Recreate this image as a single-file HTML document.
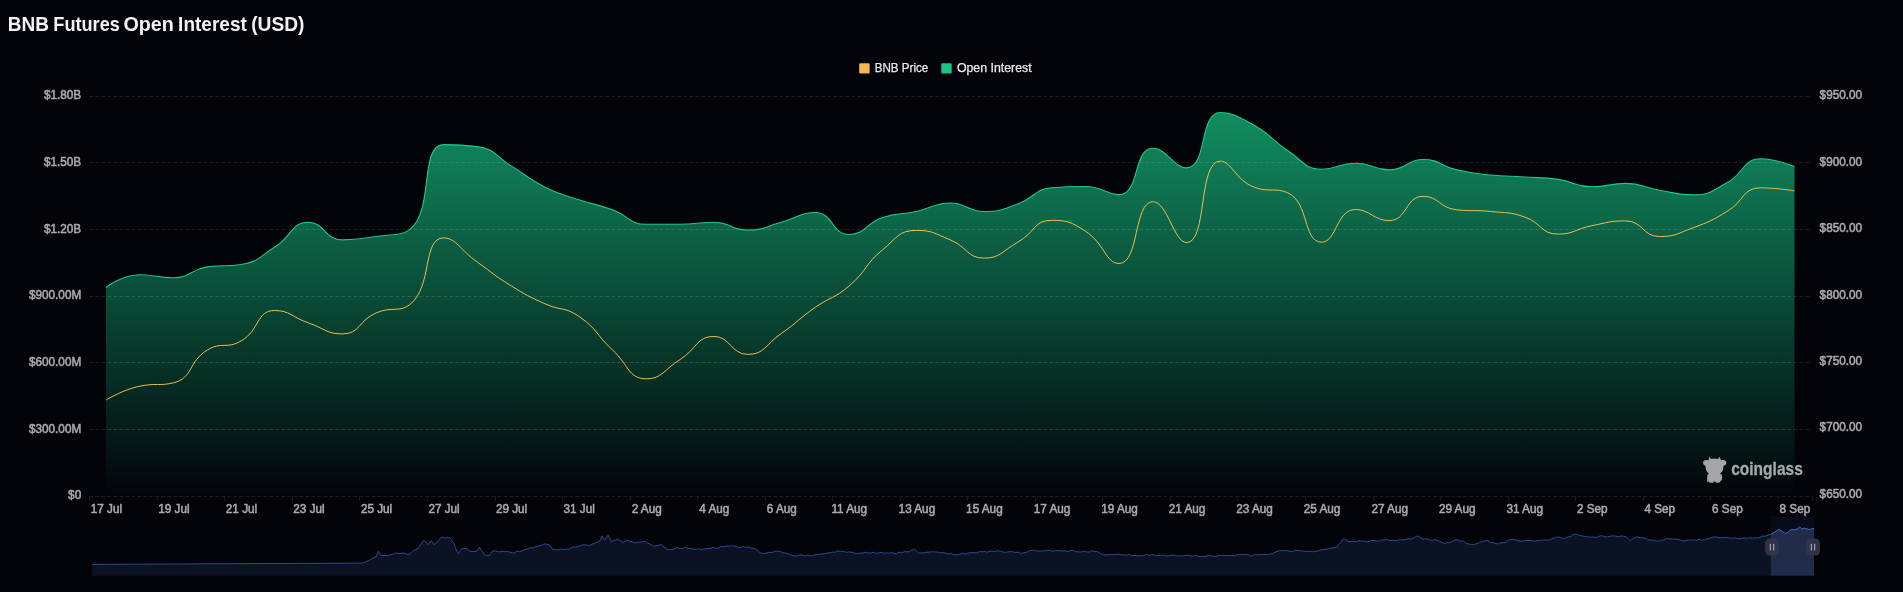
<!DOCTYPE html>
<html><head><meta charset="utf-8"><title>BNB Futures Open Interest</title>
<style>
html,body{margin:0;padding:0;background:#02040a;}
body{width:1903px;height:592px;overflow:hidden;font-family:"Liberation Sans",sans-serif;}
svg{display:block;will-change:transform;}
text{font-family:"Liberation Sans",sans-serif;}
.ax{font-size:12.3px;fill:#a9aaad;stroke:#a9aaad;stroke-width:0.55px;}
.lg{font-size:12px;fill:#e9eaed;stroke:#e9eaed;stroke-width:0.25px;}
</style></head><body>
<svg width="1903" height="592" viewBox="0 0 1903 592">
<defs>
<linearGradient id="gg" gradientUnits="userSpaceOnUse" x1="0" y1="112.5" x2="0" y2="496.5">
<stop offset="0" stop-color="#17c685" stop-opacity="0.705"/>
<stop offset="1" stop-color="#17c685" stop-opacity="0"/>
</linearGradient>
<clipPath id="ac"><path d="M106.00 287.50C106.00 287.50 122.35 274.70 139.77 274.70C156.12 274.70 157.03 277.70 173.54 277.70C190.80 277.70 190.04 269.41 207.31 266.90C223.81 264.50 225.18 266.90 241.08 264.50C258.95 261.80 258.77 257.05 274.85 247.00C292.54 235.95 290.94 222.30 308.62 222.30C324.71 222.30 324.53 239.90 342.39 239.90C358.30 239.90 359.42 239.10 376.16 236.50C393.19 233.85 400.67 236.50 409.93 229.40C434.44 210.62 419.06 144.60 443.70 144.60C452.83 144.60 461.76 144.60 477.47 146.60C495.53 148.90 494.58 155.88 511.24 165.90C528.35 176.18 527.25 178.31 545.01 187.20C561.02 195.21 561.71 193.99 578.78 199.70C595.48 205.29 596.02 203.78 612.55 209.80C629.79 216.08 628.72 224.30 646.32 224.30C662.49 224.30 663.22 224.30 680.09 224.30C696.99 224.30 697.18 222.30 713.86 222.30C730.95 222.30 730.75 230.10 747.63 230.10C764.52 230.10 764.64 226.67 781.40 222.30C798.41 217.87 799.44 212.50 815.17 212.50C833.21 212.50 831.51 234.50 848.94 234.50C865.28 234.50 865.02 223.62 882.71 217.60C898.79 212.12 899.72 215.12 916.48 211.50C933.49 207.82 933.37 203.00 950.25 203.00C967.14 203.00 967.08 211.50 984.02 211.50C1000.85 211.50 1001.58 209.69 1017.79 204.00C1035.35 197.84 1033.81 189.24 1051.56 187.80C1067.58 186.50 1068.67 186.50 1085.33 186.50C1102.44 186.50 1106.36 194.60 1119.10 194.60C1140.13 194.60 1132.78 148.30 1152.87 148.30C1166.55 148.30 1173.95 167.90 1186.64 167.90C1207.72 167.90 1198.72 112.50 1220.41 112.50C1232.49 112.50 1238.62 116.50 1254.18 125.30C1272.39 135.60 1270.29 139.20 1287.95 150.70C1304.06 161.20 1303.85 169.30 1321.72 169.30C1337.62 169.30 1338.63 163.20 1355.49 163.20C1372.40 163.20 1372.59 169.90 1389.26 169.90C1406.36 169.90 1406.15 159.50 1423.03 159.50C1439.92 159.50 1439.63 165.96 1456.80 169.90C1473.40 173.71 1473.60 173.22 1490.57 175.00C1507.37 176.77 1507.46 175.90 1524.34 177.00C1541.23 178.10 1541.40 177.00 1558.11 179.40C1575.17 181.85 1574.84 186.80 1591.88 186.80C1608.61 186.80 1608.89 183.40 1625.65 183.40C1642.66 183.40 1642.45 187.31 1659.42 190.20C1676.22 193.06 1676.73 194.90 1693.19 194.90C1710.50 194.90 1711.29 191.18 1726.96 182.80C1745.06 173.13 1742.34 158.80 1760.73 158.80C1776.11 158.80 1794.50 166.60 1794.50 166.60L1794.50 496.50 L106.00 496.50 Z"/></clipPath>
</defs>
<rect x="0" y="0" width="1903" height="592" fill="#02040a"/>
<text x="7.70" y="30.5" font-size="19.3" font-weight="bold" fill="#f2f3f5" textLength="41.20" lengthAdjust="spacingAndGlyphs">BNB</text><text x="53.30" y="30.5" font-size="19.3" font-weight="bold" fill="#f2f3f5" textLength="66.60" lengthAdjust="spacingAndGlyphs">Futures</text><text x="123.40" y="30.5" font-size="19.3" font-weight="bold" fill="#f2f3f5" textLength="50.50" lengthAdjust="spacingAndGlyphs">Open</text><text x="178.10" y="30.5" font-size="19.3" font-weight="bold" fill="#f2f3f5" textLength="68.70" lengthAdjust="spacingAndGlyphs">Interest</text><text x="251.20" y="30.5" font-size="19.3" font-weight="bold" fill="#f2f3f5" textLength="53.30" lengthAdjust="spacingAndGlyphs">(USD)</text>
<rect x="859.2" y="63.2" width="10.4" height="10.4" rx="1" fill="#f0b94d"/><text class="lg" x="874.7" y="72.3" textLength="53.6" lengthAdjust="spacingAndGlyphs">BNB Price</text><rect x="941.3" y="63.2" width="10.4" height="10.4" rx="1" fill="#1ac486"/><text class="lg" x="956.9" y="72.3" textLength="74.7" lengthAdjust="spacingAndGlyphs">Open Interest</text>
<line x1="89.3" y1="96.5" x2="1811.6" y2="96.5" stroke="#1b1d24" stroke-width="1" stroke-dasharray="4 2"/><line x1="89.3" y1="162.5" x2="1811.6" y2="162.5" stroke="#1b1d24" stroke-width="1" stroke-dasharray="4 2"/><line x1="89.3" y1="229.5" x2="1811.6" y2="229.5" stroke="#1b1d24" stroke-width="1" stroke-dasharray="4 2"/><line x1="89.3" y1="296.5" x2="1811.6" y2="296.5" stroke="#1b1d24" stroke-width="1" stroke-dasharray="4 2"/><line x1="89.3" y1="362.5" x2="1811.6" y2="362.5" stroke="#1b1d24" stroke-width="1" stroke-dasharray="4 2"/><line x1="89.3" y1="429.5" x2="1811.6" y2="429.5" stroke="#1b1d24" stroke-width="1" stroke-dasharray="4 2"/><line x1="89.3" y1="496.5" x2="1811.6" y2="496.5" stroke="#1b1d24" stroke-width="1" stroke-dasharray="4 2"/>
<line x1="89.5" y1="496" x2="89.5" y2="501" stroke="#181a21" stroke-width="1"/><line x1="157.5" y1="496" x2="157.5" y2="501" stroke="#181a21" stroke-width="1"/><line x1="224.5" y1="496" x2="224.5" y2="501" stroke="#181a21" stroke-width="1"/><line x1="292.5" y1="496" x2="292.5" y2="501" stroke="#181a21" stroke-width="1"/><line x1="359.5" y1="496" x2="359.5" y2="501" stroke="#181a21" stroke-width="1"/><line x1="427.5" y1="496" x2="427.5" y2="501" stroke="#181a21" stroke-width="1"/><line x1="495.5" y1="496" x2="495.5" y2="501" stroke="#181a21" stroke-width="1"/><line x1="562.5" y1="496" x2="562.5" y2="501" stroke="#181a21" stroke-width="1"/><line x1="630.5" y1="496" x2="630.5" y2="501" stroke="#181a21" stroke-width="1"/><line x1="697.5" y1="496" x2="697.5" y2="501" stroke="#181a21" stroke-width="1"/><line x1="765.5" y1="496" x2="765.5" y2="501" stroke="#181a21" stroke-width="1"/><line x1="832.5" y1="496" x2="832.5" y2="501" stroke="#181a21" stroke-width="1"/><line x1="900.5" y1="496" x2="900.5" y2="501" stroke="#181a21" stroke-width="1"/><line x1="967.5" y1="496" x2="967.5" y2="501" stroke="#181a21" stroke-width="1"/><line x1="1035.5" y1="496" x2="1035.5" y2="501" stroke="#181a21" stroke-width="1"/><line x1="1102.5" y1="496" x2="1102.5" y2="501" stroke="#181a21" stroke-width="1"/><line x1="1170.5" y1="496" x2="1170.5" y2="501" stroke="#181a21" stroke-width="1"/><line x1="1237.5" y1="496" x2="1237.5" y2="501" stroke="#181a21" stroke-width="1"/><line x1="1305.5" y1="496" x2="1305.5" y2="501" stroke="#181a21" stroke-width="1"/><line x1="1373.5" y1="496" x2="1373.5" y2="501" stroke="#181a21" stroke-width="1"/><line x1="1440.5" y1="496" x2="1440.5" y2="501" stroke="#181a21" stroke-width="1"/><line x1="1508.5" y1="496" x2="1508.5" y2="501" stroke="#181a21" stroke-width="1"/><line x1="1575.5" y1="496" x2="1575.5" y2="501" stroke="#181a21" stroke-width="1"/><line x1="1643.5" y1="496" x2="1643.5" y2="501" stroke="#181a21" stroke-width="1"/><line x1="1710.5" y1="496" x2="1710.5" y2="501" stroke="#181a21" stroke-width="1"/><line x1="1778.5" y1="496" x2="1778.5" y2="501" stroke="#181a21" stroke-width="1"/><line x1="1812.5" y1="496" x2="1812.5" y2="501" stroke="#181a21" stroke-width="1"/>
<text class="ax" x="81.2" y="99" text-anchor="end" textLength="37.2" lengthAdjust="spacingAndGlyphs">$1.80B</text><text class="ax" x="81.2" y="166" text-anchor="end" textLength="37.2" lengthAdjust="spacingAndGlyphs">$1.50B</text><text class="ax" x="81.2" y="233" text-anchor="end" textLength="37.2" lengthAdjust="spacingAndGlyphs">$1.20B</text><text class="ax" x="81.2" y="299" text-anchor="end" textLength="52.2" lengthAdjust="spacingAndGlyphs">$900.00M</text><text class="ax" x="81.2" y="366" text-anchor="end" textLength="52.2" lengthAdjust="spacingAndGlyphs">$600.00M</text><text class="ax" x="81.2" y="433" text-anchor="end" textLength="52.2" lengthAdjust="spacingAndGlyphs">$300.00M</text><text class="ax" x="81.2" y="499" text-anchor="end" textLength="13.1" lengthAdjust="spacingAndGlyphs">$0</text><text class="ax" x="1819.6" y="99" textLength="42.5" lengthAdjust="spacingAndGlyphs">$950.00</text><text class="ax" x="1819.6" y="166" textLength="42.5" lengthAdjust="spacingAndGlyphs">$900.00</text><text class="ax" x="1819.6" y="232" textLength="42.5" lengthAdjust="spacingAndGlyphs">$850.00</text><text class="ax" x="1819.6" y="299" textLength="42.5" lengthAdjust="spacingAndGlyphs">$800.00</text><text class="ax" x="1819.6" y="365" textLength="42.5" lengthAdjust="spacingAndGlyphs">$750.00</text><text class="ax" x="1819.6" y="431" textLength="42.5" lengthAdjust="spacingAndGlyphs">$700.00</text><text class="ax" x="1819.6" y="498" textLength="42.5" lengthAdjust="spacingAndGlyphs">$650.00</text><text class="ax" x="106.4" y="513" text-anchor="middle" textLength="31.3" lengthAdjust="spacingAndGlyphs">17 Jul</text><text class="ax" x="173.9" y="513" text-anchor="middle" textLength="31.3" lengthAdjust="spacingAndGlyphs">19 Jul</text><text class="ax" x="241.5" y="513" text-anchor="middle" textLength="31.3" lengthAdjust="spacingAndGlyphs">21 Jul</text><text class="ax" x="309.0" y="513" text-anchor="middle" textLength="31.3" lengthAdjust="spacingAndGlyphs">23 Jul</text><text class="ax" x="376.6" y="513" text-anchor="middle" textLength="31.3" lengthAdjust="spacingAndGlyphs">25 Jul</text><text class="ax" x="444.1" y="513" text-anchor="middle" textLength="31.3" lengthAdjust="spacingAndGlyphs">27 Jul</text><text class="ax" x="511.6" y="513" text-anchor="middle" textLength="31.3" lengthAdjust="spacingAndGlyphs">29 Jul</text><text class="ax" x="579.2" y="513" text-anchor="middle" textLength="31.3" lengthAdjust="spacingAndGlyphs">31 Jul</text><text class="ax" x="646.7" y="513" text-anchor="middle" textLength="30.0" lengthAdjust="spacingAndGlyphs">2 Aug</text><text class="ax" x="714.3" y="513" text-anchor="middle" textLength="30.0" lengthAdjust="spacingAndGlyphs">4 Aug</text><text class="ax" x="781.8" y="513" text-anchor="middle" textLength="30.0" lengthAdjust="spacingAndGlyphs">6 Aug</text><text class="ax" x="849.3" y="513" text-anchor="middle" textLength="35.7" lengthAdjust="spacingAndGlyphs">11 Aug</text><text class="ax" x="916.9" y="513" text-anchor="middle" textLength="36.6" lengthAdjust="spacingAndGlyphs">13 Aug</text><text class="ax" x="984.4" y="513" text-anchor="middle" textLength="36.6" lengthAdjust="spacingAndGlyphs">15 Aug</text><text class="ax" x="1052.0" y="513" text-anchor="middle" textLength="36.6" lengthAdjust="spacingAndGlyphs">17 Aug</text><text class="ax" x="1119.5" y="513" text-anchor="middle" textLength="36.6" lengthAdjust="spacingAndGlyphs">19 Aug</text><text class="ax" x="1187.0" y="513" text-anchor="middle" textLength="36.6" lengthAdjust="spacingAndGlyphs">21 Aug</text><text class="ax" x="1254.6" y="513" text-anchor="middle" textLength="36.6" lengthAdjust="spacingAndGlyphs">23 Aug</text><text class="ax" x="1322.1" y="513" text-anchor="middle" textLength="36.6" lengthAdjust="spacingAndGlyphs">25 Aug</text><text class="ax" x="1389.7" y="513" text-anchor="middle" textLength="36.6" lengthAdjust="spacingAndGlyphs">27 Aug</text><text class="ax" x="1457.2" y="513" text-anchor="middle" textLength="36.6" lengthAdjust="spacingAndGlyphs">29 Aug</text><text class="ax" x="1524.7" y="513" text-anchor="middle" textLength="36.6" lengthAdjust="spacingAndGlyphs">31 Aug</text><text class="ax" x="1592.3" y="513" text-anchor="middle" textLength="30.7" lengthAdjust="spacingAndGlyphs">2 Sep</text><text class="ax" x="1659.8" y="513" text-anchor="middle" textLength="30.7" lengthAdjust="spacingAndGlyphs">4 Sep</text><text class="ax" x="1727.4" y="513" text-anchor="middle" textLength="30.7" lengthAdjust="spacingAndGlyphs">6 Sep</text><text class="ax" x="1794.9" y="513" text-anchor="middle" textLength="30.7" lengthAdjust="spacingAndGlyphs">8 Sep</text>
<path d="M106.00 287.50C106.00 287.50 122.35 274.70 139.77 274.70C156.12 274.70 157.03 277.70 173.54 277.70C190.80 277.70 190.04 269.41 207.31 266.90C223.81 264.50 225.18 266.90 241.08 264.50C258.95 261.80 258.77 257.05 274.85 247.00C292.54 235.95 290.94 222.30 308.62 222.30C324.71 222.30 324.53 239.90 342.39 239.90C358.30 239.90 359.42 239.10 376.16 236.50C393.19 233.85 400.67 236.50 409.93 229.40C434.44 210.62 419.06 144.60 443.70 144.60C452.83 144.60 461.76 144.60 477.47 146.60C495.53 148.90 494.58 155.88 511.24 165.90C528.35 176.18 527.25 178.31 545.01 187.20C561.02 195.21 561.71 193.99 578.78 199.70C595.48 205.29 596.02 203.78 612.55 209.80C629.79 216.08 628.72 224.30 646.32 224.30C662.49 224.30 663.22 224.30 680.09 224.30C696.99 224.30 697.18 222.30 713.86 222.30C730.95 222.30 730.75 230.10 747.63 230.10C764.52 230.10 764.64 226.67 781.40 222.30C798.41 217.87 799.44 212.50 815.17 212.50C833.21 212.50 831.51 234.50 848.94 234.50C865.28 234.50 865.02 223.62 882.71 217.60C898.79 212.12 899.72 215.12 916.48 211.50C933.49 207.82 933.37 203.00 950.25 203.00C967.14 203.00 967.08 211.50 984.02 211.50C1000.85 211.50 1001.58 209.69 1017.79 204.00C1035.35 197.84 1033.81 189.24 1051.56 187.80C1067.58 186.50 1068.67 186.50 1085.33 186.50C1102.44 186.50 1106.36 194.60 1119.10 194.60C1140.13 194.60 1132.78 148.30 1152.87 148.30C1166.55 148.30 1173.95 167.90 1186.64 167.90C1207.72 167.90 1198.72 112.50 1220.41 112.50C1232.49 112.50 1238.62 116.50 1254.18 125.30C1272.39 135.60 1270.29 139.20 1287.95 150.70C1304.06 161.20 1303.85 169.30 1321.72 169.30C1337.62 169.30 1338.63 163.20 1355.49 163.20C1372.40 163.20 1372.59 169.90 1389.26 169.90C1406.36 169.90 1406.15 159.50 1423.03 159.50C1439.92 159.50 1439.63 165.96 1456.80 169.90C1473.40 173.71 1473.60 173.22 1490.57 175.00C1507.37 176.77 1507.46 175.90 1524.34 177.00C1541.23 178.10 1541.40 177.00 1558.11 179.40C1575.17 181.85 1574.84 186.80 1591.88 186.80C1608.61 186.80 1608.89 183.40 1625.65 183.40C1642.66 183.40 1642.45 187.31 1659.42 190.20C1676.22 193.06 1676.73 194.90 1693.19 194.90C1710.50 194.90 1711.29 191.18 1726.96 182.80C1745.06 173.13 1742.34 158.80 1760.73 158.80C1776.11 158.80 1794.50 166.60 1794.50 166.60L1794.50 496.50 L106.00 496.50 Z" fill="url(#gg)"/>
<line x1="89.3" y1="162.5" x2="1811.6" y2="162.5" stroke="#ffffff" stroke-opacity="0.055" stroke-width="1" stroke-dasharray="4 2" clip-path="url(#ac)"/><line x1="89.3" y1="229.5" x2="1811.6" y2="229.5" stroke="#ffffff" stroke-opacity="0.055" stroke-width="1" stroke-dasharray="4 2" clip-path="url(#ac)"/><line x1="89.3" y1="296.5" x2="1811.6" y2="296.5" stroke="#ffffff" stroke-opacity="0.055" stroke-width="1" stroke-dasharray="4 2" clip-path="url(#ac)"/><line x1="89.3" y1="362.5" x2="1811.6" y2="362.5" stroke="#ffffff" stroke-opacity="0.055" stroke-width="1" stroke-dasharray="4 2" clip-path="url(#ac)"/><line x1="89.3" y1="429.5" x2="1811.6" y2="429.5" stroke="#ffffff" stroke-opacity="0.055" stroke-width="1" stroke-dasharray="4 2" clip-path="url(#ac)"/><path d="M106.00 287.50C106.00 287.50 122.35 274.70 139.77 274.70C156.12 274.70 157.03 277.70 173.54 277.70C190.80 277.70 190.04 269.41 207.31 266.90C223.81 264.50 225.18 266.90 241.08 264.50C258.95 261.80 258.77 257.05 274.85 247.00C292.54 235.95 290.94 222.30 308.62 222.30C324.71 222.30 324.53 239.90 342.39 239.90C358.30 239.90 359.42 239.10 376.16 236.50C393.19 233.85 400.67 236.50 409.93 229.40C434.44 210.62 419.06 144.60 443.70 144.60C452.83 144.60 461.76 144.60 477.47 146.60C495.53 148.90 494.58 155.88 511.24 165.90C528.35 176.18 527.25 178.31 545.01 187.20C561.02 195.21 561.71 193.99 578.78 199.70C595.48 205.29 596.02 203.78 612.55 209.80C629.79 216.08 628.72 224.30 646.32 224.30C662.49 224.30 663.22 224.30 680.09 224.30C696.99 224.30 697.18 222.30 713.86 222.30C730.95 222.30 730.75 230.10 747.63 230.10C764.52 230.10 764.64 226.67 781.40 222.30C798.41 217.87 799.44 212.50 815.17 212.50C833.21 212.50 831.51 234.50 848.94 234.50C865.28 234.50 865.02 223.62 882.71 217.60C898.79 212.12 899.72 215.12 916.48 211.50C933.49 207.82 933.37 203.00 950.25 203.00C967.14 203.00 967.08 211.50 984.02 211.50C1000.85 211.50 1001.58 209.69 1017.79 204.00C1035.35 197.84 1033.81 189.24 1051.56 187.80C1067.58 186.50 1068.67 186.50 1085.33 186.50C1102.44 186.50 1106.36 194.60 1119.10 194.60C1140.13 194.60 1132.78 148.30 1152.87 148.30C1166.55 148.30 1173.95 167.90 1186.64 167.90C1207.72 167.90 1198.72 112.50 1220.41 112.50C1232.49 112.50 1238.62 116.50 1254.18 125.30C1272.39 135.60 1270.29 139.20 1287.95 150.70C1304.06 161.20 1303.85 169.30 1321.72 169.30C1337.62 169.30 1338.63 163.20 1355.49 163.20C1372.40 163.20 1372.59 169.90 1389.26 169.90C1406.36 169.90 1406.15 159.50 1423.03 159.50C1439.92 159.50 1439.63 165.96 1456.80 169.90C1473.40 173.71 1473.60 173.22 1490.57 175.00C1507.37 176.77 1507.46 175.90 1524.34 177.00C1541.23 178.10 1541.40 177.00 1558.11 179.40C1575.17 181.85 1574.84 186.80 1591.88 186.80C1608.61 186.80 1608.89 183.40 1625.65 183.40C1642.66 183.40 1642.45 187.31 1659.42 190.20C1676.22 193.06 1676.73 194.90 1693.19 194.90C1710.50 194.90 1711.29 191.18 1726.96 182.80C1745.06 173.13 1742.34 158.80 1760.73 158.80C1776.11 158.80 1794.50 166.60 1794.50 166.60" fill="none" stroke="#1dc98b" stroke-width="1.1"/>
<path d="M106.00 400.10C106.00 400.10 122.27 389.86 139.77 386.20C156.04 382.80 159.39 386.20 173.54 382.80C193.16 378.08 187.93 362.00 207.31 350.00C221.70 341.10 226.41 349.58 241.08 341.00C260.18 329.83 256.00 310.50 274.85 310.50C289.77 310.50 291.61 317.11 308.62 323.00C325.38 328.81 326.47 333.90 342.39 333.90C360.24 333.90 358.15 320.74 376.16 312.90C391.92 306.04 399.20 312.90 409.93 304.50C432.97 286.48 422.01 237.90 443.70 237.90C455.78 237.90 460.51 250.15 477.47 262.20C494.28 274.15 493.71 275.10 511.24 285.90C527.48 295.90 527.62 295.97 545.01 303.80C561.39 311.17 564.25 306.36 578.78 316.30C598.02 329.46 595.06 333.81 612.55 350.00C628.83 365.06 628.32 378.80 646.32 378.80C662.09 378.80 663.63 369.83 680.09 359.50C697.40 348.63 696.41 336.40 713.86 336.40C730.18 336.40 731.07 354.40 747.63 354.40C764.84 354.40 765.10 344.74 781.40 333.40C798.87 321.24 797.73 319.61 815.17 307.40C831.50 295.96 833.89 298.96 848.94 286.10C867.66 270.11 863.77 265.32 882.71 249.70C897.54 237.47 898.72 230.40 916.48 230.40C932.49 230.40 934.12 233.28 950.25 239.90C967.89 247.13 966.90 258.10 984.02 258.10C1000.67 258.10 1001.54 251.29 1017.79 242.20C1035.31 232.39 1033.61 220.30 1051.56 220.30C1067.38 220.30 1070.77 221.79 1085.33 231.10C1104.54 243.39 1105.62 263.50 1119.10 263.50C1139.39 263.50 1133.61 201.70 1152.87 201.70C1167.38 201.70 1173.96 242.60 1186.64 242.60C1207.73 242.60 1197.65 161.10 1220.41 161.10C1231.42 161.10 1235.44 180.10 1254.18 187.20C1269.21 192.90 1275.65 187.20 1287.95 192.90C1309.42 202.85 1302.82 242.20 1321.72 242.20C1336.59 242.20 1336.26 209.50 1355.49 209.50C1370.03 209.50 1373.70 220.60 1389.26 220.60C1407.47 220.60 1405.01 196.30 1423.03 196.30C1438.78 196.30 1439.30 207.97 1456.80 209.80C1473.07 211.50 1473.78 209.80 1490.57 211.50C1507.55 213.22 1508.32 211.54 1524.34 216.90C1542.09 222.84 1540.51 234.10 1558.11 234.10C1574.28 234.10 1574.83 229.03 1591.88 225.70C1608.60 222.43 1609.50 220.90 1625.65 220.90C1643.27 220.90 1642.00 236.50 1659.42 236.50C1675.77 236.50 1676.90 233.73 1693.19 227.70C1710.67 221.23 1710.89 220.99 1726.96 211.50C1744.66 201.04 1742.20 187.80 1760.73 187.80C1775.97 187.80 1794.50 190.90 1794.50 190.90" fill="none" stroke="#ecbe50" stroke-width="1"/>
<g id="wm" fill="#a3a6a8">
<path d="M1709.3 457 L1711.3 459.1 Q1714.5 457.9 1717.7 459.1 L1719.7 457 L1721 460.3 Q1724.5 459.6 1726.2 461.4 Q1726.8 464.4 1724.4 465.6 L1723.4 466.2 C1723.4 469.6 1722.4 472.2 1720 473.5 Q1722.3 474.3 1722.2 477 Q1722.2 480 1720.6 481 L1720 482 Q1719.6 482.8 1718.6 482.8 L1716.6 482.8 Q1715.6 482.8 1715.4 481.6 L1713.8 481.6 Q1713.6 482.8 1712.6 482.8 L1710.4 482.8 Q1709.4 482.8 1709 482 L1708.4 481.2 L1706.6 482.2 L1707.4 480.2 Q1707.1 479 1707.2 477 Q1707.1 474.3 1709 473.5 C1706.6 472.2 1705.6 469.6 1705.6 466.2 L1704.9 465.6 Q1702.6 464.4 1703.2 461.4 Q1704.9 459.6 1708.4 460.3 Z"/>
</g>
<text x="1731.2" y="475.4" font-size="18" font-weight="bold" fill="#a6a9aa" stroke="#a6a9aa" stroke-width="0.3" textLength="71.6" lengthAdjust="spacingAndGlyphs">coinglass</text>
<path d="M92.1 564.4 L362.5 563.1 L369.3 560.4 L372.6 558.3 L376.0 557.0 L378.4 551.3 L381.0 555.4 L384.4 555.6 L387.8 555.7 L390.6 554.6 L393.4 554.1 L396.2 553.0 L399.1 553.6 L402.1 553.1 L405.1 553.4 L408.0 554.7 L410.5 553.7 L413.0 551.2 L415.5 549.7 L418.0 548.6 L423.8 540.2 L428.1 544.6 L431.5 540.6 L433.9 544.6 L436.5 543.0 L439.0 539.6 L441.6 537.2 L444.4 538.0 L447.2 537.6 L450.0 537.9 L454.0 543.6 L456.0 549.3 L458.4 553.7 L461.8 548.6 L466.8 548.6 L470.2 551.3 L473.5 551.5 L476.9 551.3 L479.3 547.3 L482.0 551.3 L485.3 555.4 L489.7 555.4 L492.0 551.3 L494.5 550.7 L497.1 551.5 L499.6 551.9 L502.1 551.3 L504.7 551.7 L507.2 551.3 L512.2 553.0 L514.7 552.7 L517.3 551.0 L519.8 551.6 L522.3 550.7 L524.9 549.6 L527.4 549.3 L530.2 547.6 L533.0 548.1 L535.8 546.6 L538.6 546.1 L541.4 545.4 L544.2 543.9 L549.2 544.6 L552.6 549.3 L555.4 549.7 L558.2 550.0 L561.0 549.1 L563.8 549.8 L566.6 549.2 L569.4 549.3 L572.8 547.0 L575.4 547.4 L578.1 547.0 L580.7 545.3 L583.4 545.0 L586.0 544.8 L588.7 545.7 L591.3 544.6 L594.1 543.4 L596.9 542.5 L599.7 541.2 L602.0 535.9 L604.7 540.2 L608.1 535.2 L611.4 541.9 L614.8 540.2 L618.2 539.2 L623.2 542.6 L626.6 540.2 L629.4 541.1 L632.2 541.8 L635.0 542.9 L637.5 542.2 L640.0 542.2 L642.6 541.8 L645.1 541.2 L647.6 543.2 L650.2 544.1 L652.7 545.8 L655.2 546.3 L661.2 544.6 L667.0 549.3 L669.6 549.6 L672.3 549.6 L674.9 548.7 L677.5 547.6 L680.1 548.5 L682.8 548.4 L685.4 547.3 L687.9 548.5 L690.5 548.4 L693.0 549.2 L695.5 549.3 L698.4 548.7 L701.3 549.6 L704.2 549.0 L707.1 548.4 L710.0 548.6 L712.8 547.4 L715.7 548.3 L718.5 548.1 L721.3 546.2 L724.2 546.9 L727.0 546.0 L729.7 546.0 L732.4 545.8 L735.0 546.2 L737.7 547.3 L740.4 547.6 L743.1 546.4 L745.8 547.6 L748.4 546.8 L751.1 548.2 L753.8 548.0 L757.1 550.2 L760.5 553.0 L763.3 553.4 L766.1 553.3 L769.0 552.2 L771.8 552.7 L774.6 551.3 L777.4 551.3 L780.2 551.4 L783.0 553.0 L785.8 552.9 L788.6 553.9 L791.4 555.1 L794.2 556.0 L796.8 556.0 L799.4 555.1 L802.0 554.8 L804.6 556.0 L807.3 555.0 L809.9 555.9 L812.5 555.7 L815.1 554.6 L817.7 554.7 L820.2 554.2 L822.8 553.8 L825.3 553.6 L827.8 553.0 L830.3 552.5 L832.9 552.1 L835.4 552.2 L837.9 551.0 L840.7 551.3 L843.5 551.5 L846.3 552.4 L849.1 551.9 L851.9 552.3 L854.7 553.0 L857.3 553.8 L859.9 553.0 L862.6 553.1 L865.2 552.2 L867.8 552.9 L870.4 553.1 L873.0 552.2 L875.6 553.2 L878.2 553.2 L880.9 552.3 L883.5 553.2 L886.1 552.9 L888.7 553.3 L891.3 552.7 L893.9 553.4 L896.6 553.4 L899.2 552.2 L901.8 553.0 L904.4 551.6 L906.9 551.9 L909.5 551.7 L912.0 549.9 L914.6 549.6 L918.6 553.0 L921.4 552.8 L924.2 552.8 L927.0 552.2 L929.8 552.1 L932.6 551.8 L935.4 552.0 L937.9 552.1 L940.5 552.8 L943.0 552.7 L945.5 553.1 L948.0 554.2 L950.5 553.2 L953.1 554.5 L955.6 554.7 L958.2 554.8 L960.9 553.8 L963.5 553.4 L966.2 554.2 L968.8 552.9 L971.5 552.6 L974.1 552.7 L976.7 552.9 L979.4 551.6 L982.0 551.8 L984.7 551.5 L987.3 552.1 L990.0 551.2 L992.6 551.0 L995.1 551.8 L997.6 550.8 L1000.2 551.2 L1002.7 551.9 L1005.2 552.5 L1007.8 551.9 L1010.3 551.7 L1012.8 551.7 L1015.3 552.6 L1017.9 552.1 L1020.4 553.4 L1022.9 553.0 L1026.2 552.4 L1029.6 550.7 L1032.2 550.2 L1034.8 550.4 L1037.4 551.3 L1040.0 551.0 L1042.5 551.3 L1045.1 550.6 L1047.7 550.2 L1050.3 550.5 L1052.9 551.4 L1055.5 550.5 L1058.1 550.7 L1060.7 550.8 L1063.2 550.9 L1065.8 550.9 L1068.4 551.8 L1071.0 550.5 L1073.6 550.3 L1076.2 551.9 L1078.8 551.8 L1081.4 552.0 L1084.0 551.1 L1086.5 552.0 L1089.1 552.0 L1091.7 550.8 L1094.3 551.7 L1096.9 551.3 L1100.2 553.6 L1103.6 554.7 L1106.1 555.0 L1108.6 554.8 L1111.2 554.4 L1113.7 554.5 L1116.2 554.4 L1118.8 554.1 L1121.3 555.1 L1123.8 554.6 L1126.3 555.5 L1128.8 554.2 L1131.4 555.7 L1133.9 555.4 L1136.4 555.8 L1139.0 555.8 L1141.5 555.8 L1144.0 555.3 L1146.5 554.4 L1149.0 555.6 L1151.6 554.7 L1154.1 554.9 L1156.6 555.6 L1159.2 555.4 L1161.7 555.2 L1164.2 555.4 L1166.8 556.2 L1169.4 555.7 L1172.0 555.2 L1174.7 555.1 L1177.3 556.2 L1179.9 555.6 L1182.5 556.1 L1185.1 555.4 L1187.8 555.2 L1190.4 555.8 L1193.0 556.3 L1195.6 555.2 L1198.2 556.3 L1200.8 556.6 L1203.5 556.4 L1206.1 556.5 L1208.7 555.1 L1211.3 556.0 L1213.9 556.2 L1216.5 556.5 L1219.1 555.1 L1221.7 555.4 L1224.3 555.3 L1226.9 555.7 L1229.5 555.5 L1232.1 555.5 L1234.7 555.9 L1237.3 554.6 L1239.8 554.6 L1242.4 554.7 L1245.0 554.6 L1247.6 554.4 L1250.2 555.9 L1252.8 555.7 L1255.4 554.3 L1258.0 554.9 L1260.6 554.6 L1263.2 554.5 L1265.8 554.5 L1268.4 554.7 L1270.9 554.0 L1273.5 553.0 L1276.0 551.7 L1278.5 551.0 L1281.1 550.5 L1283.8 550.8 L1286.4 550.4 L1289.1 551.2 L1291.7 551.5 L1294.4 550.9 L1297.0 550.4 L1299.6 550.6 L1302.3 551.0 L1304.9 551.4 L1307.6 551.7 L1310.2 551.1 L1312.9 551.8 L1315.5 551.3 L1318.2 551.0 L1320.9 550.1 L1323.6 549.5 L1326.2 549.1 L1328.9 549.0 L1331.6 547.9 L1334.3 547.9 L1337.0 547.0 L1340.3 542.7 L1343.7 538.5 L1348.8 541.9 L1351.3 541.3 L1353.8 541.7 L1356.4 541.8 L1358.9 540.7 L1361.4 541.1 L1363.9 541.0 L1366.4 541.6 L1369.0 541.6 L1371.5 540.5 L1374.0 540.6 L1376.6 541.2 L1379.3 540.9 L1381.9 539.9 L1384.6 540.1 L1387.2 539.5 L1389.9 540.5 L1392.5 540.2 L1395.1 540.5 L1397.8 540.2 L1400.4 539.9 L1403.1 539.9 L1405.7 539.5 L1408.4 538.6 L1411.0 539.2 L1414.3 537.7 L1417.7 535.9 L1422.8 539.2 L1425.6 538.7 L1428.4 539.3 L1431.2 540.7 L1434.0 539.8 L1436.8 540.2 L1439.6 541.2 L1444.6 543.9 L1447.3 542.4 L1450.0 542.9 L1452.7 541.0 L1455.4 539.9 L1458.1 539.9 L1460.8 541.4 L1463.5 541.1 L1466.1 543.3 L1468.8 544.0 L1471.5 544.6 L1474.2 544.4 L1476.9 543.8 L1479.6 542.3 L1482.3 541.9 L1485.0 540.6 L1487.7 540.5 L1490.4 542.4 L1493.1 542.6 L1495.8 543.6 L1498.5 543.9 L1501.0 542.4 L1503.5 542.8 L1506.0 542.3 L1508.6 540.0 L1511.1 539.7 L1513.6 539.2 L1516.4 540.0 L1519.2 541.1 L1522.0 541.2 L1524.7 540.7 L1527.4 540.5 L1530.1 540.5 L1532.8 541.0 L1535.5 541.1 L1538.1 540.4 L1540.8 540.3 L1543.5 540.2 L1546.2 540.0 L1548.9 540.2 L1552.2 538.7 L1555.6 537.5 L1558.1 536.9 L1560.7 537.7 L1563.2 538.6 L1565.7 537.9 L1568.2 536.8 L1570.8 536.5 L1573.3 534.5 L1575.8 534.2 L1578.5 535.1 L1581.2 535.8 L1583.9 536.3 L1586.6 536.6 L1589.3 537.2 L1591.9 537.0 L1594.5 537.2 L1597.1 537.4 L1599.7 536.0 L1602.4 535.8 L1605.0 536.8 L1607.6 536.9 L1610.2 536.1 L1612.8 535.9 L1615.5 536.0 L1618.2 536.7 L1620.9 536.0 L1623.6 536.3 L1626.3 536.9 L1630.3 540.9 L1633.3 538.4 L1636.4 536.9 L1639.1 537.6 L1641.9 537.7 L1644.6 538.1 L1647.3 539.4 L1650.0 540.4 L1652.8 539.8 L1655.5 541.0 L1658.2 541.2 L1661.0 540.2 L1663.8 540.0 L1666.6 538.5 L1669.4 539.0 L1672.2 538.9 L1675.0 539.2 L1677.9 539.3 L1680.7 540.5 L1683.5 540.9 L1686.1 540.5 L1688.7 540.0 L1691.3 540.1 L1693.9 539.8 L1696.6 540.4 L1699.2 539.2 L1701.8 540.4 L1704.4 539.4 L1707.0 539.2 L1710.3 538.2 L1713.7 536.9 L1716.3 537.0 L1718.9 537.7 L1721.5 537.8 L1724.1 537.5 L1726.7 537.5 L1729.3 538.0 L1731.8 538.4 L1734.4 537.7 L1737.0 538.4 L1739.6 538.9 L1742.2 538.2 L1744.8 537.9 L1747.4 538.5 L1749.9 537.7 L1752.4 538.2 L1754.9 537.8 L1757.5 538.0 L1760.0 537.5 L1762.5 536.1 L1765.0 536.2 L1770.8 534.4 L1776.0 531.3 L1779.1 529.4 L1782.0 531.5 L1785.4 533.6 L1788.0 532.2 L1790.6 529.9 L1794.0 529.8 L1797.5 529.2 L1799.6 526.9 L1802.1 529.0 L1804.4 528.1 L1809.0 529.6 L1814.0 528.4 L1814.0 575.8 L92.1 575.8 Z" fill="#0a1223"/>
<path d="M92.1 564.4 L362.5 563.1 L369.3 560.4 L372.6 558.3 L376.0 557.0 L378.4 551.3 L381.0 555.4 L384.4 555.6 L387.8 555.7 L390.6 554.6 L393.4 554.1 L396.2 553.0 L399.1 553.6 L402.1 553.1 L405.1 553.4 L408.0 554.7 L410.5 553.7 L413.0 551.2 L415.5 549.7 L418.0 548.6 L423.8 540.2 L428.1 544.6 L431.5 540.6 L433.9 544.6 L436.5 543.0 L439.0 539.6 L441.6 537.2 L444.4 538.0 L447.2 537.6 L450.0 537.9 L454.0 543.6 L456.0 549.3 L458.4 553.7 L461.8 548.6 L466.8 548.6 L470.2 551.3 L473.5 551.5 L476.9 551.3 L479.3 547.3 L482.0 551.3 L485.3 555.4 L489.7 555.4 L492.0 551.3 L494.5 550.7 L497.1 551.5 L499.6 551.9 L502.1 551.3 L504.7 551.7 L507.2 551.3 L512.2 553.0 L514.7 552.7 L517.3 551.0 L519.8 551.6 L522.3 550.7 L524.9 549.6 L527.4 549.3 L530.2 547.6 L533.0 548.1 L535.8 546.6 L538.6 546.1 L541.4 545.4 L544.2 543.9 L549.2 544.6 L552.6 549.3 L555.4 549.7 L558.2 550.0 L561.0 549.1 L563.8 549.8 L566.6 549.2 L569.4 549.3 L572.8 547.0 L575.4 547.4 L578.1 547.0 L580.7 545.3 L583.4 545.0 L586.0 544.8 L588.7 545.7 L591.3 544.6 L594.1 543.4 L596.9 542.5 L599.7 541.2 L602.0 535.9 L604.7 540.2 L608.1 535.2 L611.4 541.9 L614.8 540.2 L618.2 539.2 L623.2 542.6 L626.6 540.2 L629.4 541.1 L632.2 541.8 L635.0 542.9 L637.5 542.2 L640.0 542.2 L642.6 541.8 L645.1 541.2 L647.6 543.2 L650.2 544.1 L652.7 545.8 L655.2 546.3 L661.2 544.6 L667.0 549.3 L669.6 549.6 L672.3 549.6 L674.9 548.7 L677.5 547.6 L680.1 548.5 L682.8 548.4 L685.4 547.3 L687.9 548.5 L690.5 548.4 L693.0 549.2 L695.5 549.3 L698.4 548.7 L701.3 549.6 L704.2 549.0 L707.1 548.4 L710.0 548.6 L712.8 547.4 L715.7 548.3 L718.5 548.1 L721.3 546.2 L724.2 546.9 L727.0 546.0 L729.7 546.0 L732.4 545.8 L735.0 546.2 L737.7 547.3 L740.4 547.6 L743.1 546.4 L745.8 547.6 L748.4 546.8 L751.1 548.2 L753.8 548.0 L757.1 550.2 L760.5 553.0 L763.3 553.4 L766.1 553.3 L769.0 552.2 L771.8 552.7 L774.6 551.3 L777.4 551.3 L780.2 551.4 L783.0 553.0 L785.8 552.9 L788.6 553.9 L791.4 555.1 L794.2 556.0 L796.8 556.0 L799.4 555.1 L802.0 554.8 L804.6 556.0 L807.3 555.0 L809.9 555.9 L812.5 555.7 L815.1 554.6 L817.7 554.7 L820.2 554.2 L822.8 553.8 L825.3 553.6 L827.8 553.0 L830.3 552.5 L832.9 552.1 L835.4 552.2 L837.9 551.0 L840.7 551.3 L843.5 551.5 L846.3 552.4 L849.1 551.9 L851.9 552.3 L854.7 553.0 L857.3 553.8 L859.9 553.0 L862.6 553.1 L865.2 552.2 L867.8 552.9 L870.4 553.1 L873.0 552.2 L875.6 553.2 L878.2 553.2 L880.9 552.3 L883.5 553.2 L886.1 552.9 L888.7 553.3 L891.3 552.7 L893.9 553.4 L896.6 553.4 L899.2 552.2 L901.8 553.0 L904.4 551.6 L906.9 551.9 L909.5 551.7 L912.0 549.9 L914.6 549.6 L918.6 553.0 L921.4 552.8 L924.2 552.8 L927.0 552.2 L929.8 552.1 L932.6 551.8 L935.4 552.0 L937.9 552.1 L940.5 552.8 L943.0 552.7 L945.5 553.1 L948.0 554.2 L950.5 553.2 L953.1 554.5 L955.6 554.7 L958.2 554.8 L960.9 553.8 L963.5 553.4 L966.2 554.2 L968.8 552.9 L971.5 552.6 L974.1 552.7 L976.7 552.9 L979.4 551.6 L982.0 551.8 L984.7 551.5 L987.3 552.1 L990.0 551.2 L992.6 551.0 L995.1 551.8 L997.6 550.8 L1000.2 551.2 L1002.7 551.9 L1005.2 552.5 L1007.8 551.9 L1010.3 551.7 L1012.8 551.7 L1015.3 552.6 L1017.9 552.1 L1020.4 553.4 L1022.9 553.0 L1026.2 552.4 L1029.6 550.7 L1032.2 550.2 L1034.8 550.4 L1037.4 551.3 L1040.0 551.0 L1042.5 551.3 L1045.1 550.6 L1047.7 550.2 L1050.3 550.5 L1052.9 551.4 L1055.5 550.5 L1058.1 550.7 L1060.7 550.8 L1063.2 550.9 L1065.8 550.9 L1068.4 551.8 L1071.0 550.5 L1073.6 550.3 L1076.2 551.9 L1078.8 551.8 L1081.4 552.0 L1084.0 551.1 L1086.5 552.0 L1089.1 552.0 L1091.7 550.8 L1094.3 551.7 L1096.9 551.3 L1100.2 553.6 L1103.6 554.7 L1106.1 555.0 L1108.6 554.8 L1111.2 554.4 L1113.7 554.5 L1116.2 554.4 L1118.8 554.1 L1121.3 555.1 L1123.8 554.6 L1126.3 555.5 L1128.8 554.2 L1131.4 555.7 L1133.9 555.4 L1136.4 555.8 L1139.0 555.8 L1141.5 555.8 L1144.0 555.3 L1146.5 554.4 L1149.0 555.6 L1151.6 554.7 L1154.1 554.9 L1156.6 555.6 L1159.2 555.4 L1161.7 555.2 L1164.2 555.4 L1166.8 556.2 L1169.4 555.7 L1172.0 555.2 L1174.7 555.1 L1177.3 556.2 L1179.9 555.6 L1182.5 556.1 L1185.1 555.4 L1187.8 555.2 L1190.4 555.8 L1193.0 556.3 L1195.6 555.2 L1198.2 556.3 L1200.8 556.6 L1203.5 556.4 L1206.1 556.5 L1208.7 555.1 L1211.3 556.0 L1213.9 556.2 L1216.5 556.5 L1219.1 555.1 L1221.7 555.4 L1224.3 555.3 L1226.9 555.7 L1229.5 555.5 L1232.1 555.5 L1234.7 555.9 L1237.3 554.6 L1239.8 554.6 L1242.4 554.7 L1245.0 554.6 L1247.6 554.4 L1250.2 555.9 L1252.8 555.7 L1255.4 554.3 L1258.0 554.9 L1260.6 554.6 L1263.2 554.5 L1265.8 554.5 L1268.4 554.7 L1270.9 554.0 L1273.5 553.0 L1276.0 551.7 L1278.5 551.0 L1281.1 550.5 L1283.8 550.8 L1286.4 550.4 L1289.1 551.2 L1291.7 551.5 L1294.4 550.9 L1297.0 550.4 L1299.6 550.6 L1302.3 551.0 L1304.9 551.4 L1307.6 551.7 L1310.2 551.1 L1312.9 551.8 L1315.5 551.3 L1318.2 551.0 L1320.9 550.1 L1323.6 549.5 L1326.2 549.1 L1328.9 549.0 L1331.6 547.9 L1334.3 547.9 L1337.0 547.0 L1340.3 542.7 L1343.7 538.5 L1348.8 541.9 L1351.3 541.3 L1353.8 541.7 L1356.4 541.8 L1358.9 540.7 L1361.4 541.1 L1363.9 541.0 L1366.4 541.6 L1369.0 541.6 L1371.5 540.5 L1374.0 540.6 L1376.6 541.2 L1379.3 540.9 L1381.9 539.9 L1384.6 540.1 L1387.2 539.5 L1389.9 540.5 L1392.5 540.2 L1395.1 540.5 L1397.8 540.2 L1400.4 539.9 L1403.1 539.9 L1405.7 539.5 L1408.4 538.6 L1411.0 539.2 L1414.3 537.7 L1417.7 535.9 L1422.8 539.2 L1425.6 538.7 L1428.4 539.3 L1431.2 540.7 L1434.0 539.8 L1436.8 540.2 L1439.6 541.2 L1444.6 543.9 L1447.3 542.4 L1450.0 542.9 L1452.7 541.0 L1455.4 539.9 L1458.1 539.9 L1460.8 541.4 L1463.5 541.1 L1466.1 543.3 L1468.8 544.0 L1471.5 544.6 L1474.2 544.4 L1476.9 543.8 L1479.6 542.3 L1482.3 541.9 L1485.0 540.6 L1487.7 540.5 L1490.4 542.4 L1493.1 542.6 L1495.8 543.6 L1498.5 543.9 L1501.0 542.4 L1503.5 542.8 L1506.0 542.3 L1508.6 540.0 L1511.1 539.7 L1513.6 539.2 L1516.4 540.0 L1519.2 541.1 L1522.0 541.2 L1524.7 540.7 L1527.4 540.5 L1530.1 540.5 L1532.8 541.0 L1535.5 541.1 L1538.1 540.4 L1540.8 540.3 L1543.5 540.2 L1546.2 540.0 L1548.9 540.2 L1552.2 538.7 L1555.6 537.5 L1558.1 536.9 L1560.7 537.7 L1563.2 538.6 L1565.7 537.9 L1568.2 536.8 L1570.8 536.5 L1573.3 534.5 L1575.8 534.2 L1578.5 535.1 L1581.2 535.8 L1583.9 536.3 L1586.6 536.6 L1589.3 537.2 L1591.9 537.0 L1594.5 537.2 L1597.1 537.4 L1599.7 536.0 L1602.4 535.8 L1605.0 536.8 L1607.6 536.9 L1610.2 536.1 L1612.8 535.9 L1615.5 536.0 L1618.2 536.7 L1620.9 536.0 L1623.6 536.3 L1626.3 536.9 L1630.3 540.9 L1633.3 538.4 L1636.4 536.9 L1639.1 537.6 L1641.9 537.7 L1644.6 538.1 L1647.3 539.4 L1650.0 540.4 L1652.8 539.8 L1655.5 541.0 L1658.2 541.2 L1661.0 540.2 L1663.8 540.0 L1666.6 538.5 L1669.4 539.0 L1672.2 538.9 L1675.0 539.2 L1677.9 539.3 L1680.7 540.5 L1683.5 540.9 L1686.1 540.5 L1688.7 540.0 L1691.3 540.1 L1693.9 539.8 L1696.6 540.4 L1699.2 539.2 L1701.8 540.4 L1704.4 539.4 L1707.0 539.2 L1710.3 538.2 L1713.7 536.9 L1716.3 537.0 L1718.9 537.7 L1721.5 537.8 L1724.1 537.5 L1726.7 537.5 L1729.3 538.0 L1731.8 538.4 L1734.4 537.7 L1737.0 538.4 L1739.6 538.9 L1742.2 538.2 L1744.8 537.9 L1747.4 538.5 L1749.9 537.7 L1752.4 538.2 L1754.9 537.8 L1757.5 538.0 L1760.0 537.5 L1762.5 536.1 L1765.0 536.2 L1770.8 534.4 L1776.0 531.3 L1779.1 529.4 L1782.0 531.5 L1785.4 533.6 L1788.0 532.2 L1790.6 529.9 L1794.0 529.8 L1797.5 529.2 L1799.6 526.9 L1802.1 529.0 L1804.4 528.1 L1809.0 529.6 L1814.0 528.4" fill="none" stroke="#2b4a8f" stroke-width="1"/>
<clipPath id="wc"><rect x="1770.8" y="516.2" width="43.2" height="59.6"/></clipPath><rect x="1770.8" y="516.2" width="43.2" height="59.6" fill="#3c5ad0" fill-opacity="0.08"/>
<path d="M92.1 564.4 L362.5 563.1 L369.3 560.4 L372.6 558.3 L376.0 557.0 L378.4 551.3 L381.0 555.4 L384.4 555.6 L387.8 555.7 L390.6 554.6 L393.4 554.1 L396.2 553.0 L399.1 553.6 L402.1 553.1 L405.1 553.4 L408.0 554.7 L410.5 553.7 L413.0 551.2 L415.5 549.7 L418.0 548.6 L423.8 540.2 L428.1 544.6 L431.5 540.6 L433.9 544.6 L436.5 543.0 L439.0 539.6 L441.6 537.2 L444.4 538.0 L447.2 537.6 L450.0 537.9 L454.0 543.6 L456.0 549.3 L458.4 553.7 L461.8 548.6 L466.8 548.6 L470.2 551.3 L473.5 551.5 L476.9 551.3 L479.3 547.3 L482.0 551.3 L485.3 555.4 L489.7 555.4 L492.0 551.3 L494.5 550.7 L497.1 551.5 L499.6 551.9 L502.1 551.3 L504.7 551.7 L507.2 551.3 L512.2 553.0 L514.7 552.7 L517.3 551.0 L519.8 551.6 L522.3 550.7 L524.9 549.6 L527.4 549.3 L530.2 547.6 L533.0 548.1 L535.8 546.6 L538.6 546.1 L541.4 545.4 L544.2 543.9 L549.2 544.6 L552.6 549.3 L555.4 549.7 L558.2 550.0 L561.0 549.1 L563.8 549.8 L566.6 549.2 L569.4 549.3 L572.8 547.0 L575.4 547.4 L578.1 547.0 L580.7 545.3 L583.4 545.0 L586.0 544.8 L588.7 545.7 L591.3 544.6 L594.1 543.4 L596.9 542.5 L599.7 541.2 L602.0 535.9 L604.7 540.2 L608.1 535.2 L611.4 541.9 L614.8 540.2 L618.2 539.2 L623.2 542.6 L626.6 540.2 L629.4 541.1 L632.2 541.8 L635.0 542.9 L637.5 542.2 L640.0 542.2 L642.6 541.8 L645.1 541.2 L647.6 543.2 L650.2 544.1 L652.7 545.8 L655.2 546.3 L661.2 544.6 L667.0 549.3 L669.6 549.6 L672.3 549.6 L674.9 548.7 L677.5 547.6 L680.1 548.5 L682.8 548.4 L685.4 547.3 L687.9 548.5 L690.5 548.4 L693.0 549.2 L695.5 549.3 L698.4 548.7 L701.3 549.6 L704.2 549.0 L707.1 548.4 L710.0 548.6 L712.8 547.4 L715.7 548.3 L718.5 548.1 L721.3 546.2 L724.2 546.9 L727.0 546.0 L729.7 546.0 L732.4 545.8 L735.0 546.2 L737.7 547.3 L740.4 547.6 L743.1 546.4 L745.8 547.6 L748.4 546.8 L751.1 548.2 L753.8 548.0 L757.1 550.2 L760.5 553.0 L763.3 553.4 L766.1 553.3 L769.0 552.2 L771.8 552.7 L774.6 551.3 L777.4 551.3 L780.2 551.4 L783.0 553.0 L785.8 552.9 L788.6 553.9 L791.4 555.1 L794.2 556.0 L796.8 556.0 L799.4 555.1 L802.0 554.8 L804.6 556.0 L807.3 555.0 L809.9 555.9 L812.5 555.7 L815.1 554.6 L817.7 554.7 L820.2 554.2 L822.8 553.8 L825.3 553.6 L827.8 553.0 L830.3 552.5 L832.9 552.1 L835.4 552.2 L837.9 551.0 L840.7 551.3 L843.5 551.5 L846.3 552.4 L849.1 551.9 L851.9 552.3 L854.7 553.0 L857.3 553.8 L859.9 553.0 L862.6 553.1 L865.2 552.2 L867.8 552.9 L870.4 553.1 L873.0 552.2 L875.6 553.2 L878.2 553.2 L880.9 552.3 L883.5 553.2 L886.1 552.9 L888.7 553.3 L891.3 552.7 L893.9 553.4 L896.6 553.4 L899.2 552.2 L901.8 553.0 L904.4 551.6 L906.9 551.9 L909.5 551.7 L912.0 549.9 L914.6 549.6 L918.6 553.0 L921.4 552.8 L924.2 552.8 L927.0 552.2 L929.8 552.1 L932.6 551.8 L935.4 552.0 L937.9 552.1 L940.5 552.8 L943.0 552.7 L945.5 553.1 L948.0 554.2 L950.5 553.2 L953.1 554.5 L955.6 554.7 L958.2 554.8 L960.9 553.8 L963.5 553.4 L966.2 554.2 L968.8 552.9 L971.5 552.6 L974.1 552.7 L976.7 552.9 L979.4 551.6 L982.0 551.8 L984.7 551.5 L987.3 552.1 L990.0 551.2 L992.6 551.0 L995.1 551.8 L997.6 550.8 L1000.2 551.2 L1002.7 551.9 L1005.2 552.5 L1007.8 551.9 L1010.3 551.7 L1012.8 551.7 L1015.3 552.6 L1017.9 552.1 L1020.4 553.4 L1022.9 553.0 L1026.2 552.4 L1029.6 550.7 L1032.2 550.2 L1034.8 550.4 L1037.4 551.3 L1040.0 551.0 L1042.5 551.3 L1045.1 550.6 L1047.7 550.2 L1050.3 550.5 L1052.9 551.4 L1055.5 550.5 L1058.1 550.7 L1060.7 550.8 L1063.2 550.9 L1065.8 550.9 L1068.4 551.8 L1071.0 550.5 L1073.6 550.3 L1076.2 551.9 L1078.8 551.8 L1081.4 552.0 L1084.0 551.1 L1086.5 552.0 L1089.1 552.0 L1091.7 550.8 L1094.3 551.7 L1096.9 551.3 L1100.2 553.6 L1103.6 554.7 L1106.1 555.0 L1108.6 554.8 L1111.2 554.4 L1113.7 554.5 L1116.2 554.4 L1118.8 554.1 L1121.3 555.1 L1123.8 554.6 L1126.3 555.5 L1128.8 554.2 L1131.4 555.7 L1133.9 555.4 L1136.4 555.8 L1139.0 555.8 L1141.5 555.8 L1144.0 555.3 L1146.5 554.4 L1149.0 555.6 L1151.6 554.7 L1154.1 554.9 L1156.6 555.6 L1159.2 555.4 L1161.7 555.2 L1164.2 555.4 L1166.8 556.2 L1169.4 555.7 L1172.0 555.2 L1174.7 555.1 L1177.3 556.2 L1179.9 555.6 L1182.5 556.1 L1185.1 555.4 L1187.8 555.2 L1190.4 555.8 L1193.0 556.3 L1195.6 555.2 L1198.2 556.3 L1200.8 556.6 L1203.5 556.4 L1206.1 556.5 L1208.7 555.1 L1211.3 556.0 L1213.9 556.2 L1216.5 556.5 L1219.1 555.1 L1221.7 555.4 L1224.3 555.3 L1226.9 555.7 L1229.5 555.5 L1232.1 555.5 L1234.7 555.9 L1237.3 554.6 L1239.8 554.6 L1242.4 554.7 L1245.0 554.6 L1247.6 554.4 L1250.2 555.9 L1252.8 555.7 L1255.4 554.3 L1258.0 554.9 L1260.6 554.6 L1263.2 554.5 L1265.8 554.5 L1268.4 554.7 L1270.9 554.0 L1273.5 553.0 L1276.0 551.7 L1278.5 551.0 L1281.1 550.5 L1283.8 550.8 L1286.4 550.4 L1289.1 551.2 L1291.7 551.5 L1294.4 550.9 L1297.0 550.4 L1299.6 550.6 L1302.3 551.0 L1304.9 551.4 L1307.6 551.7 L1310.2 551.1 L1312.9 551.8 L1315.5 551.3 L1318.2 551.0 L1320.9 550.1 L1323.6 549.5 L1326.2 549.1 L1328.9 549.0 L1331.6 547.9 L1334.3 547.9 L1337.0 547.0 L1340.3 542.7 L1343.7 538.5 L1348.8 541.9 L1351.3 541.3 L1353.8 541.7 L1356.4 541.8 L1358.9 540.7 L1361.4 541.1 L1363.9 541.0 L1366.4 541.6 L1369.0 541.6 L1371.5 540.5 L1374.0 540.6 L1376.6 541.2 L1379.3 540.9 L1381.9 539.9 L1384.6 540.1 L1387.2 539.5 L1389.9 540.5 L1392.5 540.2 L1395.1 540.5 L1397.8 540.2 L1400.4 539.9 L1403.1 539.9 L1405.7 539.5 L1408.4 538.6 L1411.0 539.2 L1414.3 537.7 L1417.7 535.9 L1422.8 539.2 L1425.6 538.7 L1428.4 539.3 L1431.2 540.7 L1434.0 539.8 L1436.8 540.2 L1439.6 541.2 L1444.6 543.9 L1447.3 542.4 L1450.0 542.9 L1452.7 541.0 L1455.4 539.9 L1458.1 539.9 L1460.8 541.4 L1463.5 541.1 L1466.1 543.3 L1468.8 544.0 L1471.5 544.6 L1474.2 544.4 L1476.9 543.8 L1479.6 542.3 L1482.3 541.9 L1485.0 540.6 L1487.7 540.5 L1490.4 542.4 L1493.1 542.6 L1495.8 543.6 L1498.5 543.9 L1501.0 542.4 L1503.5 542.8 L1506.0 542.3 L1508.6 540.0 L1511.1 539.7 L1513.6 539.2 L1516.4 540.0 L1519.2 541.1 L1522.0 541.2 L1524.7 540.7 L1527.4 540.5 L1530.1 540.5 L1532.8 541.0 L1535.5 541.1 L1538.1 540.4 L1540.8 540.3 L1543.5 540.2 L1546.2 540.0 L1548.9 540.2 L1552.2 538.7 L1555.6 537.5 L1558.1 536.9 L1560.7 537.7 L1563.2 538.6 L1565.7 537.9 L1568.2 536.8 L1570.8 536.5 L1573.3 534.5 L1575.8 534.2 L1578.5 535.1 L1581.2 535.8 L1583.9 536.3 L1586.6 536.6 L1589.3 537.2 L1591.9 537.0 L1594.5 537.2 L1597.1 537.4 L1599.7 536.0 L1602.4 535.8 L1605.0 536.8 L1607.6 536.9 L1610.2 536.1 L1612.8 535.9 L1615.5 536.0 L1618.2 536.7 L1620.9 536.0 L1623.6 536.3 L1626.3 536.9 L1630.3 540.9 L1633.3 538.4 L1636.4 536.9 L1639.1 537.6 L1641.9 537.7 L1644.6 538.1 L1647.3 539.4 L1650.0 540.4 L1652.8 539.8 L1655.5 541.0 L1658.2 541.2 L1661.0 540.2 L1663.8 540.0 L1666.6 538.5 L1669.4 539.0 L1672.2 538.9 L1675.0 539.2 L1677.9 539.3 L1680.7 540.5 L1683.5 540.9 L1686.1 540.5 L1688.7 540.0 L1691.3 540.1 L1693.9 539.8 L1696.6 540.4 L1699.2 539.2 L1701.8 540.4 L1704.4 539.4 L1707.0 539.2 L1710.3 538.2 L1713.7 536.9 L1716.3 537.0 L1718.9 537.7 L1721.5 537.8 L1724.1 537.5 L1726.7 537.5 L1729.3 538.0 L1731.8 538.4 L1734.4 537.7 L1737.0 538.4 L1739.6 538.9 L1742.2 538.2 L1744.8 537.9 L1747.4 538.5 L1749.9 537.7 L1752.4 538.2 L1754.9 537.8 L1757.5 538.0 L1760.0 537.5 L1762.5 536.1 L1765.0 536.2 L1770.8 534.4 L1776.0 531.3 L1779.1 529.4 L1782.0 531.5 L1785.4 533.6 L1788.0 532.2 L1790.6 529.9 L1794.0 529.8 L1797.5 529.2 L1799.6 526.9 L1802.1 529.0 L1804.4 528.1 L1809.0 529.6 L1814.0 528.4 L1814.0 575.8 L92.1 575.8 Z" fill="#212b4a" clip-path="url(#wc)"/>
<path d="M92.1 564.4 L362.5 563.1 L369.3 560.4 L372.6 558.3 L376.0 557.0 L378.4 551.3 L381.0 555.4 L384.4 555.6 L387.8 555.7 L390.6 554.6 L393.4 554.1 L396.2 553.0 L399.1 553.6 L402.1 553.1 L405.1 553.4 L408.0 554.7 L410.5 553.7 L413.0 551.2 L415.5 549.7 L418.0 548.6 L423.8 540.2 L428.1 544.6 L431.5 540.6 L433.9 544.6 L436.5 543.0 L439.0 539.6 L441.6 537.2 L444.4 538.0 L447.2 537.6 L450.0 537.9 L454.0 543.6 L456.0 549.3 L458.4 553.7 L461.8 548.6 L466.8 548.6 L470.2 551.3 L473.5 551.5 L476.9 551.3 L479.3 547.3 L482.0 551.3 L485.3 555.4 L489.7 555.4 L492.0 551.3 L494.5 550.7 L497.1 551.5 L499.6 551.9 L502.1 551.3 L504.7 551.7 L507.2 551.3 L512.2 553.0 L514.7 552.7 L517.3 551.0 L519.8 551.6 L522.3 550.7 L524.9 549.6 L527.4 549.3 L530.2 547.6 L533.0 548.1 L535.8 546.6 L538.6 546.1 L541.4 545.4 L544.2 543.9 L549.2 544.6 L552.6 549.3 L555.4 549.7 L558.2 550.0 L561.0 549.1 L563.8 549.8 L566.6 549.2 L569.4 549.3 L572.8 547.0 L575.4 547.4 L578.1 547.0 L580.7 545.3 L583.4 545.0 L586.0 544.8 L588.7 545.7 L591.3 544.6 L594.1 543.4 L596.9 542.5 L599.7 541.2 L602.0 535.9 L604.7 540.2 L608.1 535.2 L611.4 541.9 L614.8 540.2 L618.2 539.2 L623.2 542.6 L626.6 540.2 L629.4 541.1 L632.2 541.8 L635.0 542.9 L637.5 542.2 L640.0 542.2 L642.6 541.8 L645.1 541.2 L647.6 543.2 L650.2 544.1 L652.7 545.8 L655.2 546.3 L661.2 544.6 L667.0 549.3 L669.6 549.6 L672.3 549.6 L674.9 548.7 L677.5 547.6 L680.1 548.5 L682.8 548.4 L685.4 547.3 L687.9 548.5 L690.5 548.4 L693.0 549.2 L695.5 549.3 L698.4 548.7 L701.3 549.6 L704.2 549.0 L707.1 548.4 L710.0 548.6 L712.8 547.4 L715.7 548.3 L718.5 548.1 L721.3 546.2 L724.2 546.9 L727.0 546.0 L729.7 546.0 L732.4 545.8 L735.0 546.2 L737.7 547.3 L740.4 547.6 L743.1 546.4 L745.8 547.6 L748.4 546.8 L751.1 548.2 L753.8 548.0 L757.1 550.2 L760.5 553.0 L763.3 553.4 L766.1 553.3 L769.0 552.2 L771.8 552.7 L774.6 551.3 L777.4 551.3 L780.2 551.4 L783.0 553.0 L785.8 552.9 L788.6 553.9 L791.4 555.1 L794.2 556.0 L796.8 556.0 L799.4 555.1 L802.0 554.8 L804.6 556.0 L807.3 555.0 L809.9 555.9 L812.5 555.7 L815.1 554.6 L817.7 554.7 L820.2 554.2 L822.8 553.8 L825.3 553.6 L827.8 553.0 L830.3 552.5 L832.9 552.1 L835.4 552.2 L837.9 551.0 L840.7 551.3 L843.5 551.5 L846.3 552.4 L849.1 551.9 L851.9 552.3 L854.7 553.0 L857.3 553.8 L859.9 553.0 L862.6 553.1 L865.2 552.2 L867.8 552.9 L870.4 553.1 L873.0 552.2 L875.6 553.2 L878.2 553.2 L880.9 552.3 L883.5 553.2 L886.1 552.9 L888.7 553.3 L891.3 552.7 L893.9 553.4 L896.6 553.4 L899.2 552.2 L901.8 553.0 L904.4 551.6 L906.9 551.9 L909.5 551.7 L912.0 549.9 L914.6 549.6 L918.6 553.0 L921.4 552.8 L924.2 552.8 L927.0 552.2 L929.8 552.1 L932.6 551.8 L935.4 552.0 L937.9 552.1 L940.5 552.8 L943.0 552.7 L945.5 553.1 L948.0 554.2 L950.5 553.2 L953.1 554.5 L955.6 554.7 L958.2 554.8 L960.9 553.8 L963.5 553.4 L966.2 554.2 L968.8 552.9 L971.5 552.6 L974.1 552.7 L976.7 552.9 L979.4 551.6 L982.0 551.8 L984.7 551.5 L987.3 552.1 L990.0 551.2 L992.6 551.0 L995.1 551.8 L997.6 550.8 L1000.2 551.2 L1002.7 551.9 L1005.2 552.5 L1007.8 551.9 L1010.3 551.7 L1012.8 551.7 L1015.3 552.6 L1017.9 552.1 L1020.4 553.4 L1022.9 553.0 L1026.2 552.4 L1029.6 550.7 L1032.2 550.2 L1034.8 550.4 L1037.4 551.3 L1040.0 551.0 L1042.5 551.3 L1045.1 550.6 L1047.7 550.2 L1050.3 550.5 L1052.9 551.4 L1055.5 550.5 L1058.1 550.7 L1060.7 550.8 L1063.2 550.9 L1065.8 550.9 L1068.4 551.8 L1071.0 550.5 L1073.6 550.3 L1076.2 551.9 L1078.8 551.8 L1081.4 552.0 L1084.0 551.1 L1086.5 552.0 L1089.1 552.0 L1091.7 550.8 L1094.3 551.7 L1096.9 551.3 L1100.2 553.6 L1103.6 554.7 L1106.1 555.0 L1108.6 554.8 L1111.2 554.4 L1113.7 554.5 L1116.2 554.4 L1118.8 554.1 L1121.3 555.1 L1123.8 554.6 L1126.3 555.5 L1128.8 554.2 L1131.4 555.7 L1133.9 555.4 L1136.4 555.8 L1139.0 555.8 L1141.5 555.8 L1144.0 555.3 L1146.5 554.4 L1149.0 555.6 L1151.6 554.7 L1154.1 554.9 L1156.6 555.6 L1159.2 555.4 L1161.7 555.2 L1164.2 555.4 L1166.8 556.2 L1169.4 555.7 L1172.0 555.2 L1174.7 555.1 L1177.3 556.2 L1179.9 555.6 L1182.5 556.1 L1185.1 555.4 L1187.8 555.2 L1190.4 555.8 L1193.0 556.3 L1195.6 555.2 L1198.2 556.3 L1200.8 556.6 L1203.5 556.4 L1206.1 556.5 L1208.7 555.1 L1211.3 556.0 L1213.9 556.2 L1216.5 556.5 L1219.1 555.1 L1221.7 555.4 L1224.3 555.3 L1226.9 555.7 L1229.5 555.5 L1232.1 555.5 L1234.7 555.9 L1237.3 554.6 L1239.8 554.6 L1242.4 554.7 L1245.0 554.6 L1247.6 554.4 L1250.2 555.9 L1252.8 555.7 L1255.4 554.3 L1258.0 554.9 L1260.6 554.6 L1263.2 554.5 L1265.8 554.5 L1268.4 554.7 L1270.9 554.0 L1273.5 553.0 L1276.0 551.7 L1278.5 551.0 L1281.1 550.5 L1283.8 550.8 L1286.4 550.4 L1289.1 551.2 L1291.7 551.5 L1294.4 550.9 L1297.0 550.4 L1299.6 550.6 L1302.3 551.0 L1304.9 551.4 L1307.6 551.7 L1310.2 551.1 L1312.9 551.8 L1315.5 551.3 L1318.2 551.0 L1320.9 550.1 L1323.6 549.5 L1326.2 549.1 L1328.9 549.0 L1331.6 547.9 L1334.3 547.9 L1337.0 547.0 L1340.3 542.7 L1343.7 538.5 L1348.8 541.9 L1351.3 541.3 L1353.8 541.7 L1356.4 541.8 L1358.9 540.7 L1361.4 541.1 L1363.9 541.0 L1366.4 541.6 L1369.0 541.6 L1371.5 540.5 L1374.0 540.6 L1376.6 541.2 L1379.3 540.9 L1381.9 539.9 L1384.6 540.1 L1387.2 539.5 L1389.9 540.5 L1392.5 540.2 L1395.1 540.5 L1397.8 540.2 L1400.4 539.9 L1403.1 539.9 L1405.7 539.5 L1408.4 538.6 L1411.0 539.2 L1414.3 537.7 L1417.7 535.9 L1422.8 539.2 L1425.6 538.7 L1428.4 539.3 L1431.2 540.7 L1434.0 539.8 L1436.8 540.2 L1439.6 541.2 L1444.6 543.9 L1447.3 542.4 L1450.0 542.9 L1452.7 541.0 L1455.4 539.9 L1458.1 539.9 L1460.8 541.4 L1463.5 541.1 L1466.1 543.3 L1468.8 544.0 L1471.5 544.6 L1474.2 544.4 L1476.9 543.8 L1479.6 542.3 L1482.3 541.9 L1485.0 540.6 L1487.7 540.5 L1490.4 542.4 L1493.1 542.6 L1495.8 543.6 L1498.5 543.9 L1501.0 542.4 L1503.5 542.8 L1506.0 542.3 L1508.6 540.0 L1511.1 539.7 L1513.6 539.2 L1516.4 540.0 L1519.2 541.1 L1522.0 541.2 L1524.7 540.7 L1527.4 540.5 L1530.1 540.5 L1532.8 541.0 L1535.5 541.1 L1538.1 540.4 L1540.8 540.3 L1543.5 540.2 L1546.2 540.0 L1548.9 540.2 L1552.2 538.7 L1555.6 537.5 L1558.1 536.9 L1560.7 537.7 L1563.2 538.6 L1565.7 537.9 L1568.2 536.8 L1570.8 536.5 L1573.3 534.5 L1575.8 534.2 L1578.5 535.1 L1581.2 535.8 L1583.9 536.3 L1586.6 536.6 L1589.3 537.2 L1591.9 537.0 L1594.5 537.2 L1597.1 537.4 L1599.7 536.0 L1602.4 535.8 L1605.0 536.8 L1607.6 536.9 L1610.2 536.1 L1612.8 535.9 L1615.5 536.0 L1618.2 536.7 L1620.9 536.0 L1623.6 536.3 L1626.3 536.9 L1630.3 540.9 L1633.3 538.4 L1636.4 536.9 L1639.1 537.6 L1641.9 537.7 L1644.6 538.1 L1647.3 539.4 L1650.0 540.4 L1652.8 539.8 L1655.5 541.0 L1658.2 541.2 L1661.0 540.2 L1663.8 540.0 L1666.6 538.5 L1669.4 539.0 L1672.2 538.9 L1675.0 539.2 L1677.9 539.3 L1680.7 540.5 L1683.5 540.9 L1686.1 540.5 L1688.7 540.0 L1691.3 540.1 L1693.9 539.8 L1696.6 540.4 L1699.2 539.2 L1701.8 540.4 L1704.4 539.4 L1707.0 539.2 L1710.3 538.2 L1713.7 536.9 L1716.3 537.0 L1718.9 537.7 L1721.5 537.8 L1724.1 537.5 L1726.7 537.5 L1729.3 538.0 L1731.8 538.4 L1734.4 537.7 L1737.0 538.4 L1739.6 538.9 L1742.2 538.2 L1744.8 537.9 L1747.4 538.5 L1749.9 537.7 L1752.4 538.2 L1754.9 537.8 L1757.5 538.0 L1760.0 537.5 L1762.5 536.1 L1765.0 536.2 L1770.8 534.4 L1776.0 531.3 L1779.1 529.4 L1782.0 531.5 L1785.4 533.6 L1788.0 532.2 L1790.6 529.9 L1794.0 529.8 L1797.5 529.2 L1799.6 526.9 L1802.1 529.0 L1804.4 528.1 L1809.0 529.6 L1814.0 528.4" fill="none" stroke="#3f5fa3" stroke-width="1" clip-path="url(#wc)"/>
<rect x="1765.1" y="538.6" width="13.8" height="17" rx="4.5" fill="#343647" fill-opacity="0.95"/><line x1="1770.3" y1="543.9" x2="1770.3" y2="550.3" stroke="#c3c7d6" stroke-width="0.9"/><line x1="1773.7" y1="543.9" x2="1773.7" y2="550.3" stroke="#c3c7d6" stroke-width="0.9"/><rect x="1806.1" y="538.6" width="13.8" height="17" rx="4.5" fill="#343647" fill-opacity="0.95"/><line x1="1811.3" y1="543.9" x2="1811.3" y2="550.3" stroke="#c3c7d6" stroke-width="0.9"/><line x1="1814.7" y1="543.9" x2="1814.7" y2="550.3" stroke="#c3c7d6" stroke-width="0.9"/>
</svg>
</body></html>
